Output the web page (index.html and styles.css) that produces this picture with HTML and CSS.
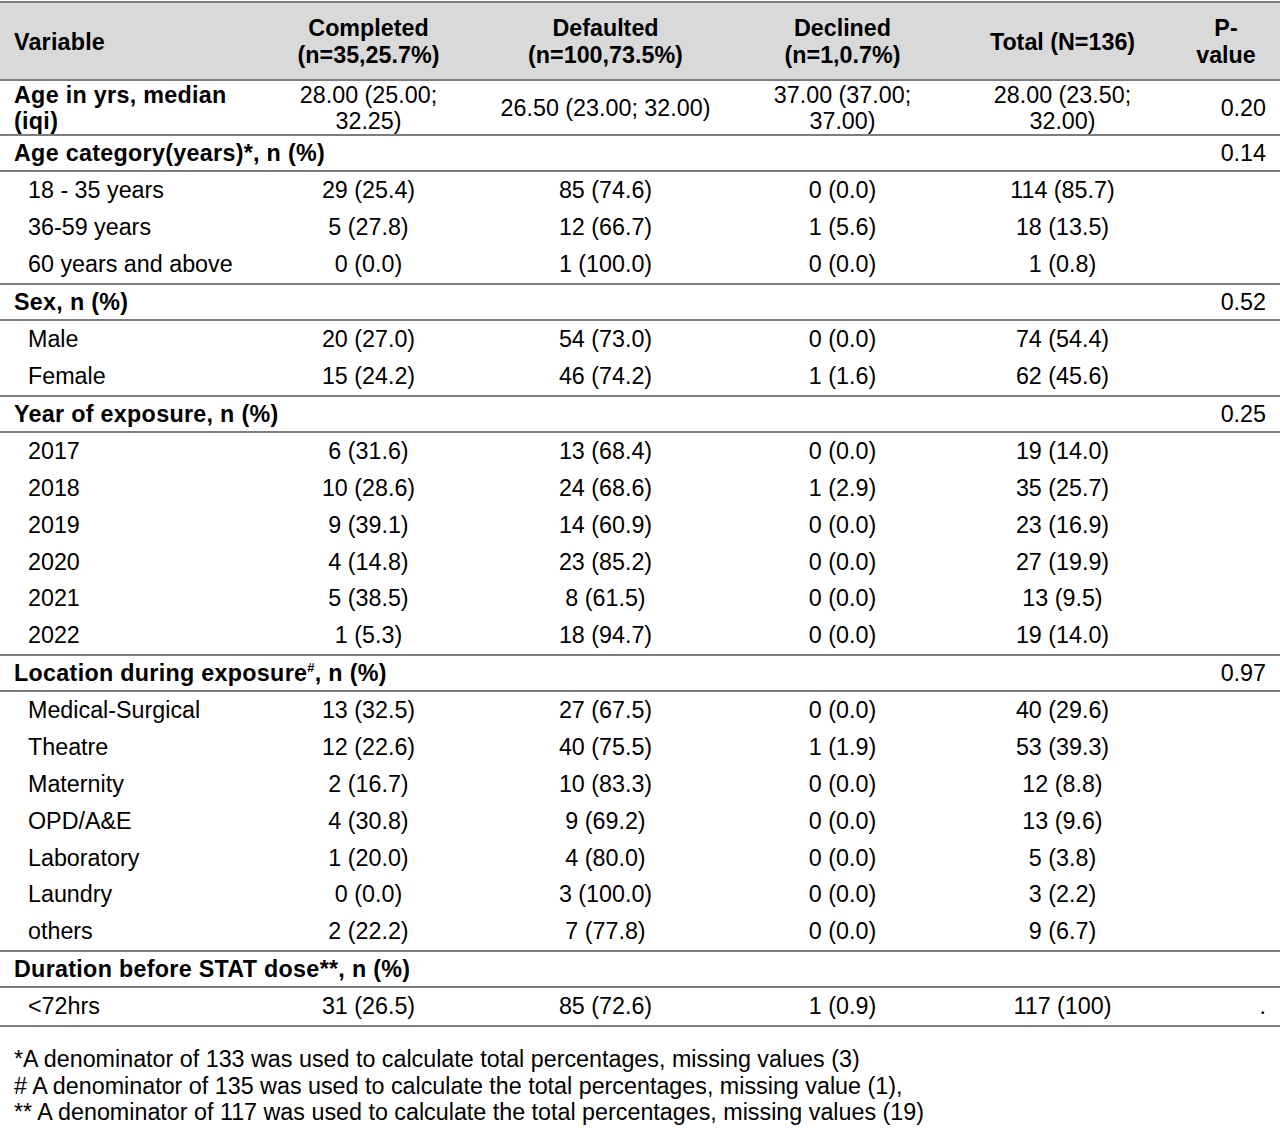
FILE: index.html
```html
<!DOCTYPE html>
<html lang="en">
<head>
  <meta charset="UTF-8">
  <title>PEP completion by characteristics</title>
  <link rel="stylesheet" href="styles.css">
</head>
<body>
  <table class="results">
    <colgroup>
      <col class="c-var">
      <col class="c-num">
      <col class="c-num">
      <col class="c-num">
      <col class="c-tot">
      <col class="c-p">
    </colgroup>
    <thead>
      <tr>
        <th class="var">Variable</th>
        <th>Completed<br>(n=35,25.7%)</th>
        <th>Defaulted<br>(n=100,73.5%)</th>
        <th>Declined<br>(n=1,0.7%)</th>
        <th>Total (N=136)</th>
        <th class="p">P-<br>value</th>
      </tr>
    </thead>
    <tbody>
      <tr class="group double">
        <td class="var">Age in yrs, median<br>(iqi)</td>
        <td class="plain">28.00 (25.00;<br>32.25)</td>
        <td class="plain">26.50 (23.00; 32.00)</td>
        <td class="plain">37.00 (37.00;<br>37.00)</td>
        <td class="plain">28.00 (23.50;<br>32.00)</td>
        <td class="plain pv">0.20</td>
      </tr>

      <tr class="group">
        <td class="var" colspan="5">Age category(years)*, n (%)</td>
        <td class="pv">0.14</td>
      </tr>
      <tr><td class="sub">18 - 35 years</td><td>29 (25.4)</td><td>85 (74.6)</td><td>0 (0.0)</td><td>114 (85.7)</td><td></td></tr>
      <tr><td class="sub">36-59 years</td><td>5 (27.8)</td><td>12 (66.7)</td><td>1 (5.6)</td><td>18 (13.5)</td><td></td></tr>
      <tr class="last"><td class="sub">60 years and above</td><td>0 (0.0)</td><td>1 (100.0)</td><td>0 (0.0)</td><td>1 (0.8)</td><td></td></tr>

      <tr class="group">
        <td class="var" colspan="5">Sex, n (%)</td>
        <td class="pv">0.52</td>
      </tr>
      <tr><td class="sub">Male</td><td>20 (27.0)</td><td>54 (73.0)</td><td>0 (0.0)</td><td>74 (54.4)</td><td></td></tr>
      <tr class="last"><td class="sub">Female</td><td>15 (24.2)</td><td>46 (74.2)</td><td>1 (1.6)</td><td>62 (45.6)</td><td></td></tr>

      <tr class="group">
        <td class="var" colspan="5">Year of exposure, n (%)</td>
        <td class="pv">0.25</td>
      </tr>
      <tr><td class="sub">2017</td><td>6 (31.6)</td><td>13 (68.4)</td><td>0 (0.0)</td><td>19 (14.0)</td><td></td></tr>
      <tr><td class="sub">2018</td><td>10 (28.6)</td><td>24 (68.6)</td><td>1 (2.9)</td><td>35 (25.7)</td><td></td></tr>
      <tr><td class="sub">2019</td><td>9 (39.1)</td><td>14 (60.9)</td><td>0 (0.0)</td><td>23 (16.9)</td><td></td></tr>
      <tr><td class="sub">2020</td><td>4 (14.8)</td><td>23 (85.2)</td><td>0 (0.0)</td><td>27 (19.9)</td><td></td></tr>
      <tr><td class="sub">2021</td><td>5 (38.5)</td><td>8 (61.5)</td><td>0 (0.0)</td><td>13 (9.5)</td><td></td></tr>
      <tr class="last"><td class="sub">2022</td><td>1 (5.3)</td><td>18 (94.7)</td><td>0 (0.0)</td><td>19 (14.0)</td><td></td></tr>

      <tr class="group">
        <td class="var" colspan="5">Location during exposure<sup>#</sup>, n (%)</td>
        <td class="pv">0.97</td>
      </tr>
      <tr><td class="sub">Medical-Surgical</td><td>13 (32.5)</td><td>27 (67.5)</td><td>0 (0.0)</td><td>40 (29.6)</td><td></td></tr>
      <tr><td class="sub">Theatre</td><td>12 (22.6)</td><td>40 (75.5)</td><td>1 (1.9)</td><td>53 (39.3)</td><td></td></tr>
      <tr><td class="sub">Maternity</td><td>2 (16.7)</td><td>10 (83.3)</td><td>0 (0.0)</td><td>12 (8.8)</td><td></td></tr>
      <tr><td class="sub">OPD/A&amp;E</td><td>4 (30.8)</td><td>9 (69.2)</td><td>0 (0.0)</td><td>13 (9.6)</td><td></td></tr>
      <tr><td class="sub">Laboratory</td><td>1 (20.0)</td><td>4 (80.0)</td><td>0 (0.0)</td><td>5 (3.8)</td><td></td></tr>
      <tr><td class="sub">Laundry</td><td>0 (0.0)</td><td>3 (100.0)</td><td>0 (0.0)</td><td>3 (2.2)</td><td></td></tr>
      <tr class="last"><td class="sub">others</td><td>2 (22.2)</td><td>7 (77.8)</td><td>0 (0.0)</td><td>9 (6.7)</td><td></td></tr>

      <tr class="group">
        <td class="var" colspan="5">Duration before STAT dose**, n (%)</td>
        <td class="pv"></td>
      </tr>
      <tr class="last"><td class="sub">&lt;72hrs</td><td>31 (26.5)</td><td>85 (72.6)</td><td>1 (0.9)</td><td>117 (100)</td><td class="pv">.</td></tr>
    </tbody>
  </table>

  <div class="notes">
    <p>*A denominator of 133 was used to calculate total percentages, missing values (3)</p>
    <p># A denominator of 135 was used to calculate the total percentages, missing value (1),</p>
    <p>** A denominator of 117 was used to calculate the total percentages, missing values (19)</p>
  </div>
</body>
</html>
```

FILE: styles.css
```css
html {
  box-sizing: border-box;
  background: #fff;
}

*, *:before, *:after {
  box-sizing: inherit;
}

body {
  margin: 0;
  padding-top: 1px;
  font-family: "Liberation Sans", Arial, sans-serif;
  font-size: 23.3px;
  color: #000;
}

.results {
  width: 1280px;
  border-collapse: collapse;
  table-layout: fixed;
  border-top: 2px solid #7d7d7d;
}

.c-var { width: 250px; }
.c-num { width: 237px; }
.c-tot { width: 203px; }
.c-p { width: 116px; }

th {
  background: #d9d9d9;
  font-weight: bold;
  text-align: center;
  line-height: 27px;
  height: 78px;
  padding: 2px 0 0;
  border-bottom: 2px solid #7d7d7d;
}

th.var {
  text-align: left;
  padding-left: 14px;
  letter-spacing: 0.2px;
}

th.p {
  padding-left: 8px;
}

td {
  padding: 0;
  text-align: center;
  line-height: 36.8px;
  white-space: nowrap;
}

td.var {
  font-weight: bold;
  text-align: left;
  padding-left: 14px;
  letter-spacing: 0.3px;
}

td.sub {
  text-align: left;
  padding-left: 28px;
}

td.pv {
  text-align: right;
  padding-right: 14px;
}

tr.group td {
  line-height: 33.4px;
  padding-top: 1px;
  border-bottom: 2px solid #7d7d7d;
}

tr.double td {
  line-height: 26px;
  padding-top: 1px;
  padding-bottom: 0;
}

tr.last td {
  border-bottom: 2px solid #7d7d7d;
}

sup {
  font-size: 13px;
  line-height: 0;
  vertical-align: 9px;
}

.notes {
  padding: 19px 14px 0;
}

.notes p {
  margin: 0;
  line-height: 26.5px;
}
```
